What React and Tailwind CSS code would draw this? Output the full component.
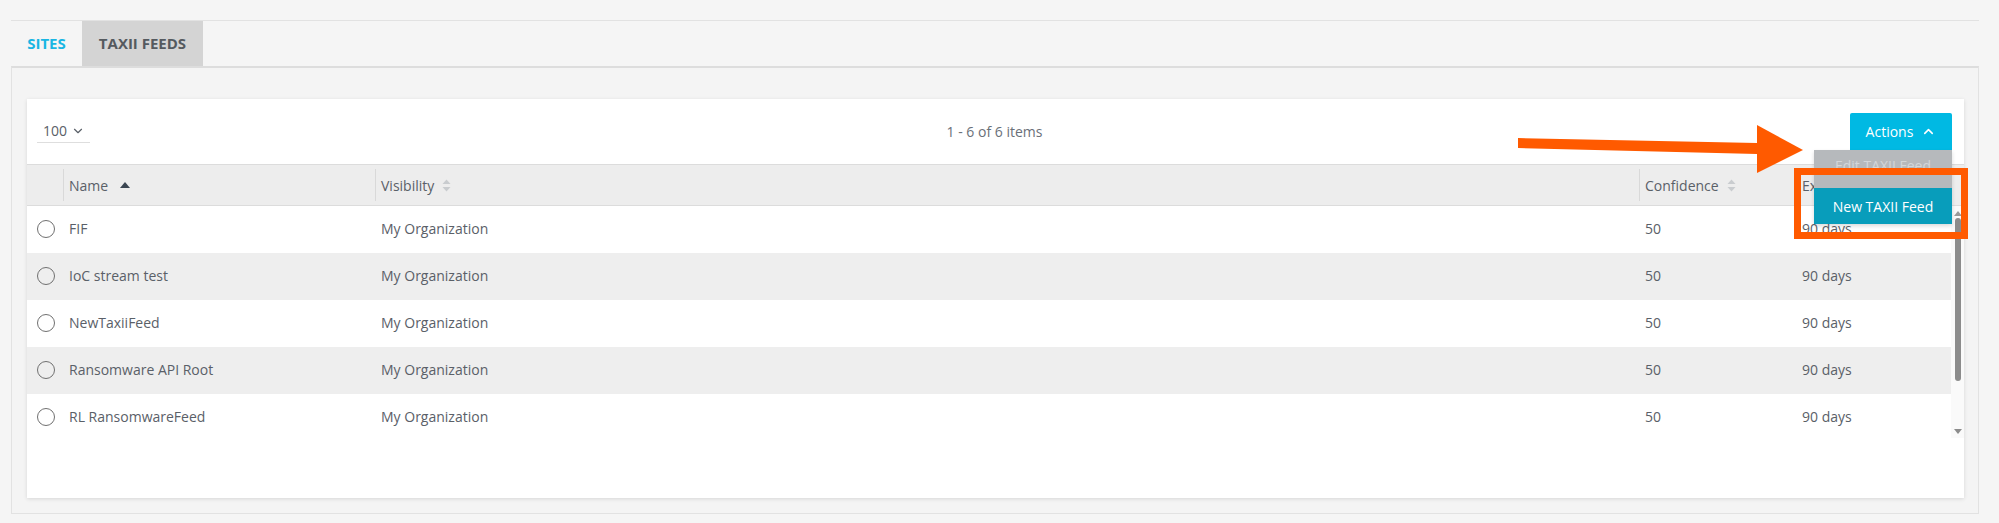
import React from 'react';
import { ChevronDown, ChevronUp } from 'lucide-react';

const rows = [
    { name: 'FIF', visibility: 'My Organization', confidence: '50', expiration: '90 days' },
    { name: 'IoC stream test', visibility: 'My Organization', confidence: '50', expiration: '90 days' },
    { name: 'NewTaxiiFeed', visibility: 'My Organization', confidence: '50', expiration: '90 days' },
    { name: 'Ransomware API Root', visibility: 'My Organization', confidence: '50', expiration: '90 days' },
    { name: 'RL RansomwareFeed', visibility: 'My Organization', confidence: '50', expiration: '90 days' },
];

const SortBoth = () => (
    <svg width="9" height="13" viewBox="0 0 9 13" className="ml-2">
        <path d="M4.5 0.5 L8.5 5 L0.5 5 Z" fill="#c9cccf" />
        <path d="M4.5 12.5 L8.5 8 L0.5 8 Z" fill="#c9cccf" />
    </svg>
);

const SortUp = () => (
    <svg width="10" height="6" viewBox="0 0 10 6" className="ml-3">
        <path d="M5 0 L10 6 L0 6 Z" fill="#3b4652" />
    </svg>
);

const HeaderCell = ({ label, icon, className }) => (
    <div className={`flex items-center h-full ${className}`}>
        <div className="w-px h-[32px] bg-[#d9d9d9]" />
        <span className="pl-[5px]">{label}</span>
        {icon}
    </div>
);

export default function App() {
    return (
        <div className="w-[1999px] h-[523px] bg-[#f5f5f5] pt-5 pl-[11px] pr-[20px] font-['Open_Sans',sans-serif] text-[14px] text-[#5a6068] overflow-hidden">
            {/* Tabs */}
            <div className="flex h-[46px] border-t border-[#e2e2e2]">
                <div className="w-[71px] flex items-center justify-center text-[15px] font-bold text-[#19b6e3]">SITES</div>
                <div className="w-[121px] flex items-center justify-center text-[15px] font-bold text-[#555a5f] bg-[#d4d4d4]">TAXII FEEDS</div>
            </div>

            {/* Tab panel */}
            <div className="h-[448px] bg-[#f4f4f4] border border-[#e2e2e2] border-t-2 border-t-[#dddddd] pl-[15px] pr-[14px] pt-[31px]">
                <div className="relative h-[399px] bg-white shadow-[0_1px_4px_rgba(0,0,0,0.12)]">
                    {/* Toolbar */}
                    <div className="grid grid-cols-[1fr_auto_1fr] items-center h-[65px] pl-[10px] pr-[12px]">
                        <div className="flex">
                            <div className="flex items-center gap-1 w-[53px] pl-[6px] pb-[1px] border-b border-[#dedede] text-[#5a6068]">
                                <span>100</span>
                                <ChevronDown size={14} strokeWidth={2} />
                            </div>
                        </div>
                        <div className="text-[#6a7079]">1 - 6 of 6 items</div>
                        <div className="flex justify-end">
                            <div className="relative">
                                <button className="w-[102px] h-[37px] bg-[#00b9e3] rounded-t-[2px] text-white flex items-center justify-center gap-2">
                                    Actions
                                    <ChevronUp size={15} strokeWidth={2.5} />
                                </button>
                                <div className="absolute top-full right-0 w-[138px] z-10 shadow-[0_2px_4px_rgba(0,0,0,0.15)]">
                                    <div className="h-[38px] pb-[7px] bg-[#b6b9bc] text-[#d3d6d9] flex items-center justify-center">Edit TAXII Feed</div>
                                    <div className="h-[36px] bg-[#089dbb] text-white flex items-center justify-center">New TAXII Feed</div>
                                </div>
                            </div>
                        </div>
                    </div>

                    {/* Header */}
                    <div className="flex h-[42px] bg-[#ededed] border-t border-b border-[#dcdcdc]">
                        <div className="w-[36px]" />
                        <HeaderCell label="Name" icon={<SortUp />} className="w-[312px]" />
                        <HeaderCell label="Visibility" icon={<SortBoth />} className="w-[1264px]" />
                        <HeaderCell label="Confidence" icon={<SortBoth />} className="w-[157px]" />
                        <HeaderCell label="Expiration" icon={<SortBoth />} className="flex-1" />
                    </div>

                    {/* Body */}
                    <div className="flex h-[232px]">
                        <div className="flex-1 overflow-hidden">
                            {rows.map((row, i) => (
                                <div key={row.name} className={`flex items-center h-[47px] pb-[2px] ${i % 2 === 1 ? 'bg-[#eeeeee]' : 'bg-white'}`}>
                                    <div className="w-[36px] flex justify-center pl-[1px]">
                                        <div className="w-[18px] h-[18px] rounded-full border-[1.5px] border-[#707070]" />
                                    </div>
                                    <div className="w-[312px] pl-[6px]">{row.name}</div>
                                    <div className="w-[1264px] pl-[6px]">{row.visibility}</div>
                                    <div className="w-[157px] pl-[6px]">{row.confidence}</div>
                                    <div className="flex-1 pl-[6px]">{row.expiration}</div>
                                </div>
                            ))}
                        </div>
                        {/* Scrollbar */}
                        <div className="w-[13px] flex flex-col items-center pt-[5px] pb-[4px] bg-[#fafafa]">
                            <svg width="8" height="5" viewBox="0 0 8 5"><path d="M4 0 L8 5 L0 5 Z" fill="#9a9a9a" /></svg>
                            <div className="w-[6px] h-[163px] mt-[2px] rounded-full bg-[#8c8c8c]" />
                            <div className="flex-1" />
                            <svg width="8" height="5" viewBox="0 0 8 5"><path d="M0 0 L8 0 L4 5 Z" fill="#8c8c8c" /></svg>
                        </div>
                    </div>

                    {/* Annotation: arrow */}
                    <svg className="absolute left-[1488px] top-[22px] z-20" width="295" height="56" viewBox="0 0 295 56">
                        <path d="M3 17 L242 22 L242 33 L3 27 Z" fill="#ff5a00" />
                        <path d="M242 4 L288 29 L242 52 Z" fill="#ff5a00" />
                    </svg>

                    {/* Annotation: highlight box */}
                    <div className="absolute left-[1767px] top-[69px] w-[174px] h-[71px] border-[7px] border-[#ff5a00] z-20" />
                </div>
            </div>
        </div>
    );
}
